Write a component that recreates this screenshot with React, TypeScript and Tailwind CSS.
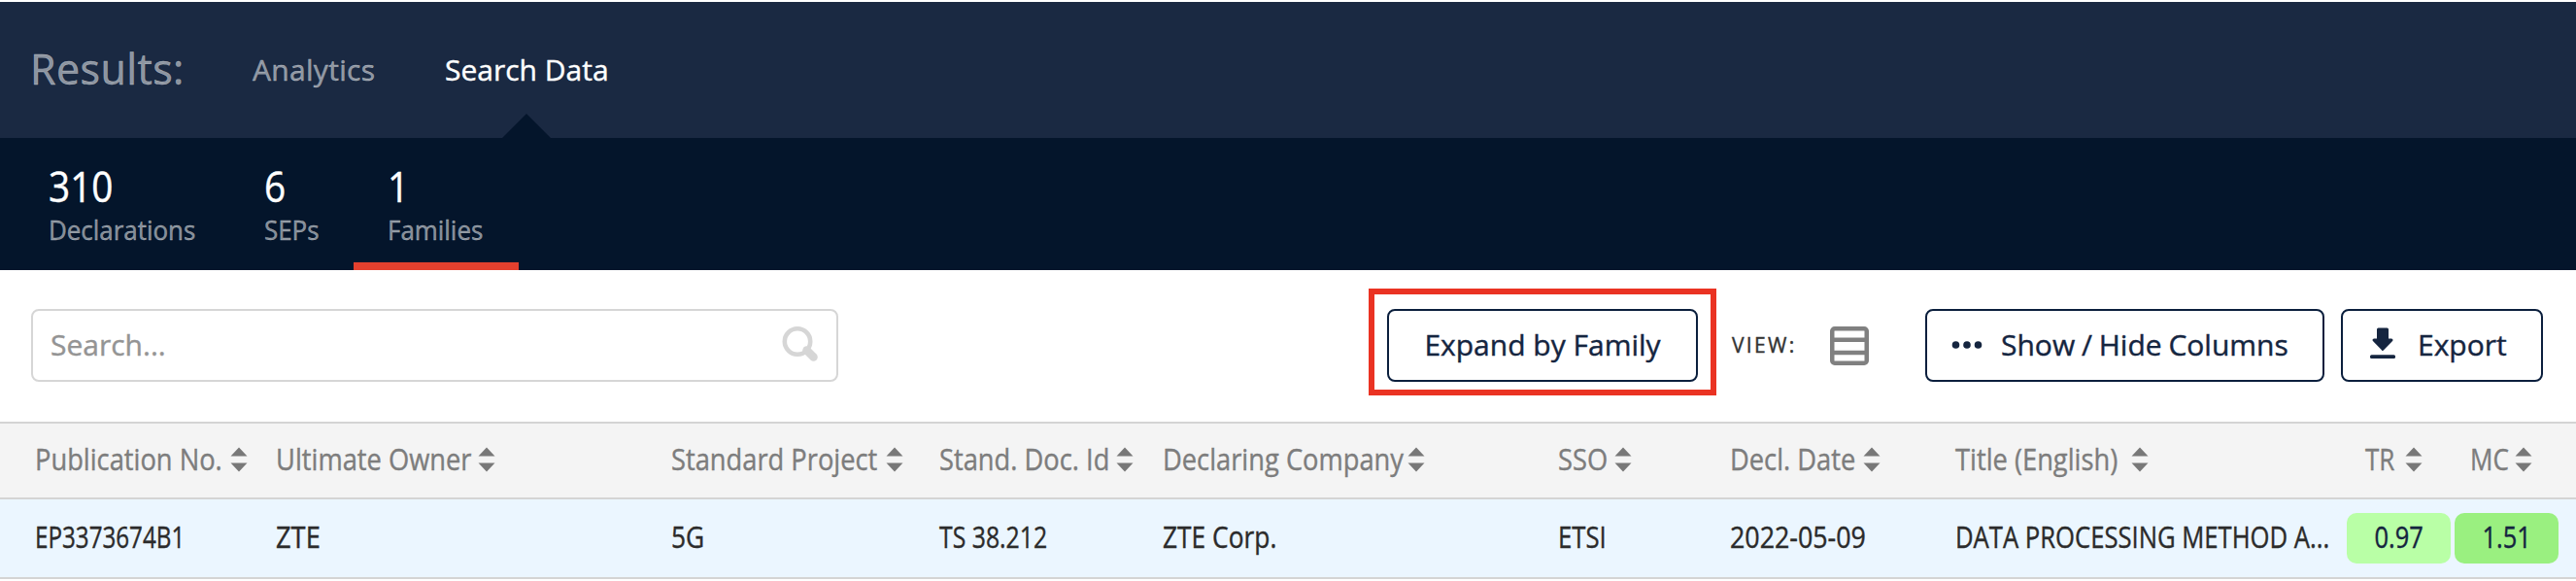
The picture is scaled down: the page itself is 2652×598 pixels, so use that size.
type Column = {
  label: string;
  value: string;
  labelClass: string;
  valueClass: string;
};

const columns: Column[] = [
  { label: "Publication No.", value: "EP3373674B1", labelClass: "w-[201px]", valueClass: "scale-x-[0.78]" },
  { label: "Ultimate Owner", value: "ZTE", labelClass: "w-[208px]", valueClass: "scale-x-[0.88]" },
  { label: "Standard Project", value: "5G", labelClass: "w-[221px]", valueClass: "scale-x-[0.85]" },
  { label: "Stand. Doc. Id", value: "TS 38.212", labelClass: "w-[182px]", valueClass: "scale-x-[0.8]" },
  { label: "Declaring Company", value: "ZTE Corp.", labelClass: "w-[252px]", valueClass: "scale-x-[0.85]" },
  { label: "SSO", value: "ETSI", labelClass: "w-[58px]", valueClass: "scale-x-[0.83]" },
  { label: "Decl. Date", value: "2022-05-09", labelClass: "w-[137px]", valueClass: "scale-x-[0.865]" },
  { label: "Title (English)", value: "DATA PROCESSING METHOD A...", labelClass: "w-[181px]", valueClass: "scale-x-[0.827]" },
];

const scores = [
  { label: "TR", value: "0.97", bg: "bg-[#b9ffa6]", cellClass: "pl-[19px]", labelClass: "w-[41px]" },
  { label: "MC", value: "1.51", bg: "bg-[#9af080]", cellClass: "pl-[16px]", labelClass: "w-[46px]" },
];

const stats = [
  { count: "310", label: "Declarations", width: "w-[222px]", active: false },
  { count: "6", label: "SEPs", width: "w-[127px]", active: false },
  { count: "1", label: "Families", width: "w-[170px]", active: true },
];

const gridCols = "grid grid-cols-[248px_407px_276px_230px_407px_177px_232px_403px_111px_107px] pl-[36px]";

function SortIcon() {
  return (
    <svg width="18" height="26" viewBox="0 0 18 26" fill="#787878" className="shrink-0">
      <path d="M9 0.5 17.5 9.5H0.5Z" />
      <path d="M9 25.5 17.5 16.5H0.5Z" />
    </svg>
  );
}

function SearchIcon() {
  return (
    <svg width="38" height="38" viewBox="0 0 38 38" fill="none" stroke="#d6d6d6">
      <circle cx="17" cy="16.5" r="13.2" strokeWidth="4.6" />
      <path d="M26.5 25.5 33.5 32.5" strokeWidth="8.5" strokeLinecap="round" />
    </svg>
  );
}

function ListIcon() {
  return (
    <svg width="40" height="40" viewBox="0 0 40 40" fill="none" stroke="#808080" strokeWidth="4.5">
      <rect x="2.25" y="2.25" width="35.5" height="35.5" rx="2.5" />
      <path d="M2 13.8H38M2 27H38" />
    </svg>
  );
}

function DownloadIcon() {
  return (
    <svg width="26" height="34" viewBox="0 0 26 34" fill="#15253f" stroke="#15253f" strokeLinejoin="round">
      <path d="M8.5 2H17.5V13H22L13 22.3 4 13H8.5Z" strokeWidth="3" />
      <rect x="0" y="28.3" width="26" height="3.8" rx="1.5" stroke="none" />
    </svg>
  );
}

function TopBar() {
  return (
    <header className="flex h-[140px] items-center bg-[#1a2942] pb-[2px] pl-[31px] text-[30px] text-white/50">
      <h1 className="w-[229px] text-[43px] tracking-[0.4px]">Results:</h1>
      <a className="w-[198px] tracking-[0.3px]">Analytics</a>
      <a className="relative text-white">
        Search Data
        <svg width="52" height="26" viewBox="0 0 52 26" fill="#04152b" className="absolute -bottom-[49px] left-[58px]">
          <path d="M26 0 52 26H0Z" />
        </svg>
      </a>
    </header>
  );
}

function StatsBar() {
  return (
    <nav className="flex h-[136px] bg-[#04152b] pl-[15px]">
      {stats.map((s) => (
        <div
          key={s.label}
          className={`${s.width} border-b-8 pt-[30px] pl-[35px] ${s.active ? "border-[#e4402e]" : "border-transparent"}`}
        >
          <div className="origin-left scale-x-[0.9] text-[43px] leading-[40px] text-white">{s.count}</div>
          <div className="mt-[5px] origin-left scale-x-[0.96] text-[27px] leading-[40px] text-white/50">{s.label}</div>
        </div>
      ))}
    </nav>
  );
}

function Toolbar() {
  const button = "flex h-[75px] items-center rounded-lg border-2 border-[#0b1f3d] pb-[3px] text-[#15253f]";

  return (
    <div className="flex h-[156px] items-start bg-white pt-[40px] pl-[32px] text-[30px]">
      <div className="flex h-[75px] w-[831px] items-center justify-between rounded-lg border-2 border-[#d6d6d6] pr-[19px] pb-[3px] pl-[18px] text-[#949494]">
        <span>Search...</span>
        <SearchIcon />
      </div>

      <div className="relative ml-[565px]">
        <button className={`${button} w-[320px] justify-center`}>Expand by Family</button>
        <div className="absolute -top-[21px] -right-[19px] -bottom-[14px] -left-[19px] border-6 border-[#ea3323]" />
      </div>

      <div className="ml-[35px] flex h-[75px] items-center">
        <span className="w-[101px] text-[21px] tracking-[2.3px] text-[#333]">VIEW:</span>
        <ListIcon />
      </div>

      <button className={`${button} ml-[58px] w-[411px] pl-[25px] [word-spacing:-1px]`}>
        <svg width="32" height="10" viewBox="0 0 32 10" fill="#15253f" className="mr-[19px]">
          <circle cx="4.5" cy="6" r="3.8" />
          <circle cx="16" cy="6" r="3.8" />
          <circle cx="27.5" cy="6" r="3.8" />
        </svg>
        Show / Hide Columns
      </button>
      <button className={`${button} ml-[17px] w-[208px] pl-[28px]`}>
        <span className="mr-[23px]">
          <DownloadIcon />
        </span>
        Export
      </button>
    </div>
  );
}

function ResultsTable() {
  return (
    <div className="text-[31px] whitespace-nowrap">
      <div className={`${gridCols} h-[80px] items-center border-y-[2px] border-[#d4d4d4] bg-[#f4f4f4] pb-[3px] text-[#7d7d7d]`}>
        {columns.map((c) => (
          <div key={c.label} className="flex items-center">
            <div className={c.labelClass}>
              <span className="inline-block origin-left scale-x-[0.88]">{c.label}</span>
            </div>
            <SortIcon />
          </div>
        ))}
        {scores.map((s) => (
          <div key={s.label} className={`flex items-center ${s.cellClass}`}>
            <div className={s.labelClass}>
              <span className="inline-block origin-left scale-x-[0.84]">{s.label}</span>
            </div>
            <SortIcon />
          </div>
        ))}
      </div>
      <div className={`${gridCols} h-[80px] items-center bg-[#ebf6ff] text-[#2b2b2b]`}>
        {columns.map((c) => (
          <div key={c.label} className="pb-[3px]">
            <span className={`inline-block origin-left ${c.valueClass}`}>{c.value}</span>
          </div>
        ))}
        {scores.map((s) => (
          <div
            key={s.label}
            className={`${s.bg} flex h-[52px] w-[107px] items-center justify-center rounded-[10px] pb-[3px] text-[#15253f]`}
          >
            <span className="scale-x-[0.82]">{s.value}</span>
          </div>
        ))}
      </div>
      <div className="h-[2px] bg-[#d4d4d4]" />
    </div>
  );
}

export default function App() {
  return (
    <div className="h-[598px] w-[2652px] overflow-hidden border-t-2 border-white bg-white font-['Open_Sans',sans-serif] [-webkit-text-stroke:0.4px]">
      <TopBar />
      <StatsBar />
      <Toolbar />
      <ResultsTable />
    </div>
  );
}
